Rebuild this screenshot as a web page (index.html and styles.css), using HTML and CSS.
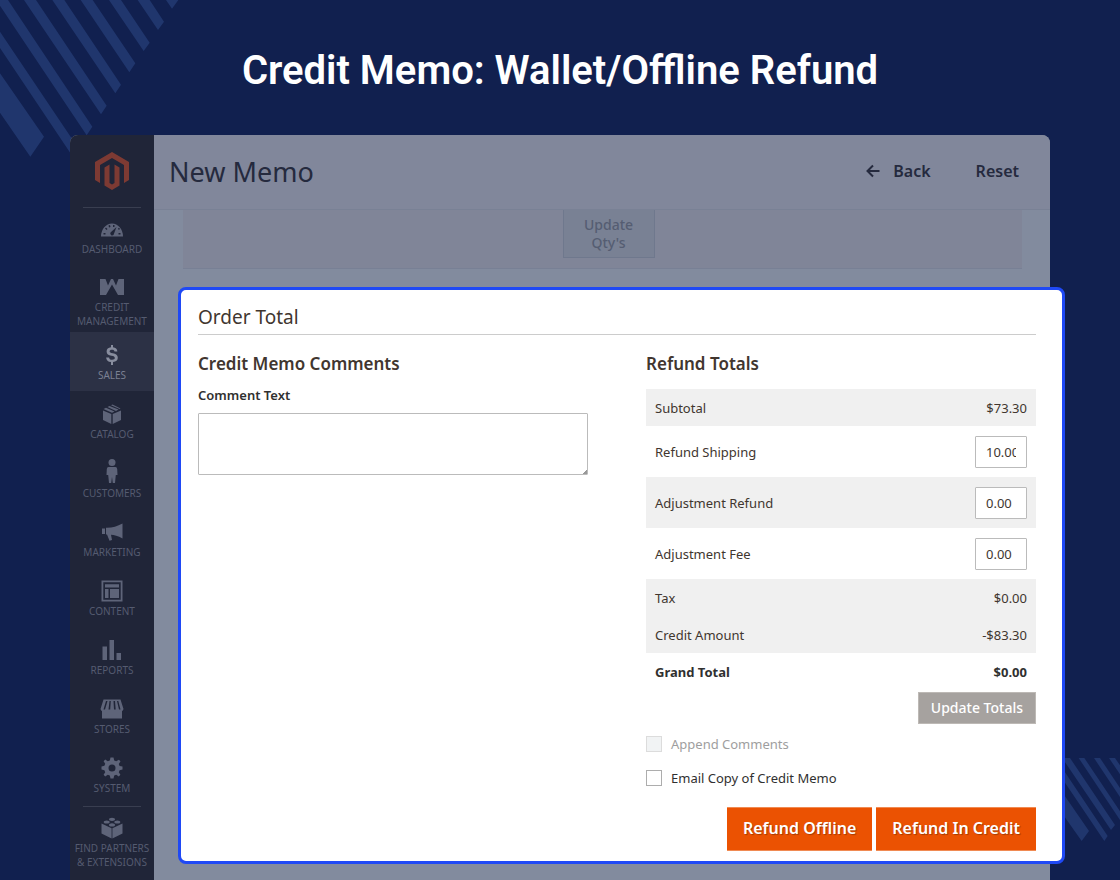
FILE: index.html
```
<!DOCTYPE html>
<html lang="en">
<head>
  <meta charset="UTF-8">
  <title>Credit Memo: Wallet/Offline Refund</title>
  <meta name="viewport" content="width=device-width, initial-scale=1.0">
  <link rel="stylesheet" href="styles.css">
</head>
<body>

  <svg class="stripes stripes-top" viewBox="0 0 540 480" aria-hidden="true">
    <path d="M498 0H535L516 26ZM413 0H449L492 65 474 90ZM327 0H363L449 128 431 153ZM242 0H278L406 190 388 217ZM157 0H193L363 254 346 280ZM72 0H108L320 317 303 343ZM0 0H24L277 380 260 406 0 17ZM0 95L234 443 217 468 0 144ZM0 220L132 410 91 470 0 338Z"/>
  </svg>
  <svg class="stripes stripes-bottom" viewBox="0 0 168 252" aria-hidden="true">
    <path d="M135 0H153L168 22V49ZM90 0H108L168 90V117ZM44 0H61L168 160V186ZM0 0H18L153 201 141 216 0 8ZM0 38L131 234 121 249 0 70ZM0 110L75 219 53 249 0 174Z"/>
  </svg>

  <h1 class="title">Credit Memo: Wallet/Offline Refund</h1>

  <div class="window">
    <nav class="sidebar">
      <a class="logo" href="#" aria-label="Magento">
        <svg viewBox="0 0 36 40">
          <path d="M18 1L1 11V29L6 32V14L18 7L30 14V32L35 29V11Z"/>
          <path d="M10.500 16.500L15.500 13.500V32L18 33.500L20.500 32V13.500L25.500 16.500V34.500L18 39L10.500 34.500Z"/>
        </svg>
      </a>
      <ul class="menu">
        <li><a href="#">
          <svg viewBox="0 0 22 22"><path fill-rule="evenodd" d="M0 18.500A11 13 0 0 1 22 18.500H0ZM12.500 17L15.500 9 9.500 14.500A2 2 0 0 0 12.500 17ZM2.500 15H4.500V16.500H2.500ZM4 10.500L5 9.500 6.500 11 5.500 12ZM7.500 7.500L9 7 9.500 9 8 9.500ZM12 7H13.500V9H12ZM17.500 15H19.500V16.500H17.500ZM17 10.500L18 9.800 19 11 17.800 12Z"/></svg>
          <span>Dashboard</span></a></li>
        <li><a href="#">
          <svg class="wide" viewBox="0 0 26 22"><path d="M1 3H6.500L9 9.500 12 3H14L17 9.500 19.500 3H25V19H19L13 8.500 7 19H1Z"/></svg>
          <span>Credit<br>Management</span></a></li>
        <li class="active"><a href="#">
          <svg viewBox="0 0 22 22"><path d="M10 1h2v2.300c2.600.300 4.200 1.700 4.400 4.100h-2.900c-.2-1.200-.8-1.700-2.500-1.700-1.600 0-2.400.500-2.400 1.600 0 1.200.9 1.500 3.200 2 3.200.700 5 1.700 5 4.500 0 2.400-1.700 4-4.800 4.300V21h-2v-2.900c-3-.3-4.700-1.900-4.900-4.700h3c.2 1.600 1 2.300 3 2.300 1.800 0 2.700-.6 2.700-1.700 0-1.300-.9-1.700-3.300-2.200-3.100-.700-4.900-1.500-4.900-4.300C5.600 5.200 7.200 3.600 10 3.300Z"/></svg>
          <span>Sales</span></a></li>
        <li><a href="#">
          <svg viewBox="0 0 22 22"><path d="M2 7.500L10.300 11V21L2 17ZM11.700 11L20 7.500V17L11.700 21ZM2.500 6L5 4.700 13.500 8.500 11 9.700ZM6.500 4L8.500 3 17.500 6.600 15 7.900ZM10 2.200L11.500 1.600 19.500 5.600 18.700 6Z"/></svg>
          <span>Catalog</span></a></li>
        <li><a href="#">
          <svg class="tall" viewBox="0 0 22 26"><circle cx="11" cy="4.500" r="3.500"/><path d="M7.500 9H14.500Q16 9 16.200 11L16.500 17H14.800L14 25H11.800L11 19 10.200 25H8L7.200 17H5.500L5.800 11Q6 9 7.500 9Z"/></svg>
          <span>Customers</span></a></li>
        <li><a href="#">
          <svg viewBox="0 0 22 22"><path d="M1 7.500H4V13H1ZM5 6.800C11 7 16 5.500 21.500 2.500V17.500C17 14.800 13 14 10 13.800L11 19 8.500 19.800 6 13.500H5Z"/></svg>
          <span>Marketing</span></a></li>
        <li><a href="#">
          <svg viewBox="0 0 22 22"><path fill-rule="evenodd" d="M.5.500H21.500V21.500H.5ZM2.300 2.300V19.700H19.700V2.300ZM4 4.200H18V7.500H4ZM4 9H7.500V18H4ZM9 9H18V18H9Z"/></svg>
          <span>Content</span></a></li>
        <li><a href="#">
          <svg viewBox="0 0 22 22"><path d="M1.500 7.500H6V21H1.500ZM8.500 1H13V21H8.500ZM15.500 14H20V21H15.500Z"/></svg>
          <span>Reports</span></a></li>
        <li><a href="#">
          <svg class="wide" viewBox="0 0 26 22"><path fill-rule="evenodd" d="M4.500 1.500H21.500L24.500 11Q24 13 23 13V20.500H3V13Q2 13 1.500 11ZM7 3L4.500 11.500H6L8.500 3ZM10.500 3L9.500 11.500H11.200L11.800 3ZM14.500 3L15 11.500H16.700L16 3ZM18 3L20 11.500H21.500L19.300 3Z"/></svg>
          <span>Stores</span></a></li>
        <li><a href="#">
          <svg viewBox="0 0 22 22"><path fill-rule="evenodd" d="M9.500.500H12.500L13.200 3.500 15.200 4.300 17.900 2.700 19.500 4.300 17.800 6.900 18.600 8.900 21.500 9.500V12.500L18.600 13.200 17.800 15.200 19.400 17.800 17.800 19.400 15.200 17.800 13.200 18.600 12.500 21.500H9.500L8.800 18.600 6.800 17.800 4.200 19.400 2.600 17.800 4.200 15.200 3.400 13.200.5 12.500V9.500L3.400 8.800 4.200 6.800 2.600 4.200 4.200 2.600 6.800 4.200 8.800 3.400ZM11 7.500A3.500 3.500 0 1 0 11 14.500 3.500 3.500 0 1 0 11 7.500Z"/></svg>
          <span>System</span></a></li>
        <li class="partners"><a href="#">
          <svg viewBox="0 0 22 22"><path d="M.5 6.500L10.600 11.300V21.500L.5 16.500ZM11.400 11.300L21.500 6.500V16.500L11.400 21.500Z"/><ellipse cx="11" cy="2.300" rx="3" ry="1.600"/><ellipse cx="5.700" cy="5" rx="3" ry="1.600"/><ellipse cx="16.300" cy="5" rx="3" ry="1.600"/><ellipse cx="11" cy="7.900" rx="3" ry="1.600"/></svg>
          <span>Find Partners<br>&amp; Extensions</span></a></li>
      </ul>
    </nav>

    <main class="main">
      <header class="page-header">
        <h2>New Memo</h2>
        <button type="button" class="link-button">
          <svg viewBox="0 0 14 14"><path d="M7 1.500L1.500 7L7 12.500M1.500 7H13.500"/></svg>
          Back
        </button>
        <button type="button" class="link-button">Reset</button>
      </header>

      <div class="items-footer">
        <button type="button" class="update-qty" disabled>Update<br>Qty's</button>
      </div>

      <section class="panel">
        <h3 class="panel-title">Order Total</h3>
        <div class="columns">
          <div class="comments">
            <h4>Credit Memo Comments</h4>
            <label for="comment">Comment Text</label>
            <textarea id="comment"></textarea>
          </div>

          <div class="refund">
            <h4>Refund Totals</h4>
            <table class="totals">
              <tbody>
                <tr class="shaded"><td>Subtotal</td><td>$73.30</td></tr>
                <tr><td><label for="shipping">Refund Shipping</label></td><td><input type="text" id="shipping" value="10.00"></td></tr>
                <tr class="shaded"><td><label for="adjustRefund">Adjustment Refund</label></td><td><input type="text" id="adjustRefund" value="0.00"></td></tr>
                <tr><td><label for="adjustFee">Adjustment Fee</label></td><td><input type="text" id="adjustFee" value="0.00"></td></tr>
                <tr class="shaded"><td>Tax</td><td>$0.00</td></tr>
                <tr class="shaded"><td>Credit Amount</td><td>-$83.30</td></tr>
              </tbody>
              <tfoot>
                <tr><td>Grand Total</td><td>$0.00</td></tr>
              </tfoot>
            </table>
            <button type="button" class="update-totals">Update Totals</button>

            <div class="option disabled">
              <input type="checkbox" id="append" disabled>
              <label for="append">Append Comments</label>
            </div>
            <div class="option">
              <input type="checkbox" id="email">
              <label for="email">Email Copy of Credit Memo</label>
            </div>

            <div class="actions">
              <button type="button">Refund Offline</button>
              <button type="button">Refund In Credit</button>
            </div>
          </div>
        </div>
      </section>
    </main>
  </div>

</body>
</html>
```
FILE: styles.css
```
* {
  box-sizing: border-box;
}

body {
  margin: 0;
  min-height: 100vh;
  display: flex;
  flex-direction: column;
  position: relative;
  overflow-x: hidden;
  background: #11204f;
  color: #41362f;
  font-family: "Noto Sans", "Open Sans", sans-serif;
  font-size: 13px;
}

button, input, textarea {
  font-family: inherit;
  color: inherit;
}

h1, h2, h3, h4 {
  margin: 0;
}

.stripes {
  position: absolute;
  fill: #20366d;
}

.stripes-top {
  top: 0;
  left: 0;
  width: 180px;
}

.stripes-bottom {
  right: 0;
  bottom: 38px;
  width: 56px;
}

.title {
  padding: 47px 20px 40px;
  position: relative;
  color: #fff;
  font-family: Roboto, sans-serif;
  font-size: 40px;
  font-weight: 600;
  line-height: 48px;
  text-align: center;
}

.window {
  flex: 1;
  display: flex;
  position: relative;
  margin: 0 70px;
  border-radius: 8px 8px 0 0;
  background: #828b9e;
}

/* sidebar */
.sidebar {
  flex: 0 0 84px;
  border-radius: 8px 0 0 0;
  background: #202538;
}

.logo {
  display: flex;
  justify-content: center;
  height: 73px;
  margin: 0 13px;
  padding-top: 16px;
  border-bottom: 1px solid #393e50;
}

.logo svg {
  width: 36px;
  height: 40px;
  fill: #7d3a33;
}

.menu {
  margin: 0;
  padding: 0;
  list-style: none;
}

.menu a {
  display: flex;
  flex-direction: column;
  align-items: center;
  min-height: 58px;
  padding: 10px 0 4px;
  color: #555b70;
  font-size: 10px;
  line-height: 14px;
  text-align: center;
  text-decoration: none;
  text-transform: uppercase;
}

.menu svg {
  width: 22px;
  height: 22px;
  margin-bottom: 2px;
  fill: #5e6479;
}

.menu svg.wide {
  width: 26px;
}

.menu svg.tall {
  height: 26px;
  margin: -4px 0 2px;
}

.menu .active {
  background: #2c3145;
}

.menu .active a,
.menu .active ~ li a {
  min-height: 59px;
  padding-top: 12px;
}

.menu .active a {
  color: #7b8092;
}

.menu .active svg {
  fill: #888d9e;
}

.menu .partners {
  margin-top: 2px;
}

.menu .active ~ .partners a {
  padding-top: 10px;
}

.partners::before {
  content: "";
  display: block;
  margin: 0 13px;
  border-top: 1px solid #393e50;
}

/* page */
.main {
  flex: 1;
  min-width: 0;
}

.page-header {
  display: flex;
  align-items: center;
  height: 75px;
  padding: 0 31px 2px 15px;
  border-bottom: 1px solid #798195;
  border-radius: 0 8px 0 0;
  background: #81879b;
  color: #252a3e;
}

.page-header h2 {
  flex: 1;
  font-size: 27px;
  font-weight: 400;
}

.link-button {
  display: flex;
  align-items: center;
  gap: 13px;
  margin-left: 45px;
  padding: 0;
  border: 0;
  background: none;
  font-size: 16px;
  font-weight: 600;
  cursor: pointer;
}

.link-button svg {
  width: 14px;
  height: 14px;
  fill: none;
  stroke: #252a3e;
  stroke-width: 2;
}

.items-footer {
  display: flex;
  justify-content: center;
  margin: 0 28px 0 29px;
  padding: 0 0 10px 12px;
  border-bottom: 1px solid #788095;
  background: #808598;
}

.update-qty {
  width: 92px;
  padding: 6px 10px 5px;
  border: 1px solid #6f788d;
  border-top: 0;
  background: #798194;
  color: #555d72;
  font-size: 14px;
  font-weight: 500;
  line-height: 18px;
}

/* order total panel */
.panel {
  margin: 18px -15px 16px 24px;
  padding: 15px 26px 10px 17px;
  border: 3px solid #1f49f5;
  border-radius: 8px;
  background: #fff;
}

.panel-title {
  padding-bottom: 4px;
  border-bottom: 1px solid #ccc;
  font-size: 19px;
  font-weight: 400;
  line-height: 25px;
}

.columns {
  display: grid;
  grid-template-columns: 1fr 1fr;
  gap: 58px;
  padding-top: 17px;
}

.columns h4 {
  font-size: 17px;
  font-weight: 600;
  line-height: 24px;
}

.comments label {
  display: block;
  margin: 9px 0 8px;
  color: #303030;
  font-size: 13px;
  font-weight: 600;
  line-height: 20px;
}

.comments textarea {
  display: block;
  width: 100%;
  height: 62px;
  border: 1px solid #bbb;
  border-radius: 1px;
  outline: none;
}

.comments textarea::-webkit-resizer {
  background: linear-gradient(135deg, transparent 85%, #999 85%);
}

.totals {
  width: 100%;
  margin-top: 13px;
  border-collapse: collapse;
}

.totals td {
  height: 37px;
  padding: 0 9px;
}

.totals td:last-child {
  text-align: right;
}

.totals .shaded {
  background: #f0f0f0;
}

.totals input {
  display: block;
  width: 52px;
  height: 32px;
  margin: 10px 0 9px auto;
  padding: 0 10px;
  border: 1px solid #bbb;
  border-radius: 1px;
  font-size: 13px;
}

.totals tfoot {
  color: #303030;
  font-weight: 700;
}

.totals tfoot td {
  height: 38px;
}

.update-totals {
  display: block;
  height: 32px;
  margin: 1px 0 0 auto;
  padding: 0 12px 2px;
  border: 1px solid #bdb9b5;
  background: #a6a29f;
  color: #fff;
  font-size: 14px;
  font-weight: 500;
}

.option {
  display: flex;
  align-items: center;
  gap: 9px;
  margin-top: 11px;
  color: #303030;
  line-height: 18px;
}

.option + .option {
  margin-top: 16px;
}

.option input {
  appearance: none;
  width: 16px;
  height: 16px;
  margin: 0;
  border: 1px solid #adadad;
  background: #fff;
}

.option.disabled {
  color: #9e9e9e;
}

.option.disabled input {
  border-color: #dcdcdc;
  background: #f1f3f4;
}

.actions {
  display: flex;
  justify-content: flex-end;
  gap: 4px;
  margin-top: 20px;
}

.actions button {
  height: 44px;
  padding: 0 16px 2px;
  border: 1px solid #f08a52;
  border-width: 1px 0;
  background: #eb5202;
  color: #fff;
  font-size: 16px;
  font-weight: 600;
  text-shadow: 1px 1px 1px rgba(0, 0, 0, .3);
  cursor: pointer;
}
```
